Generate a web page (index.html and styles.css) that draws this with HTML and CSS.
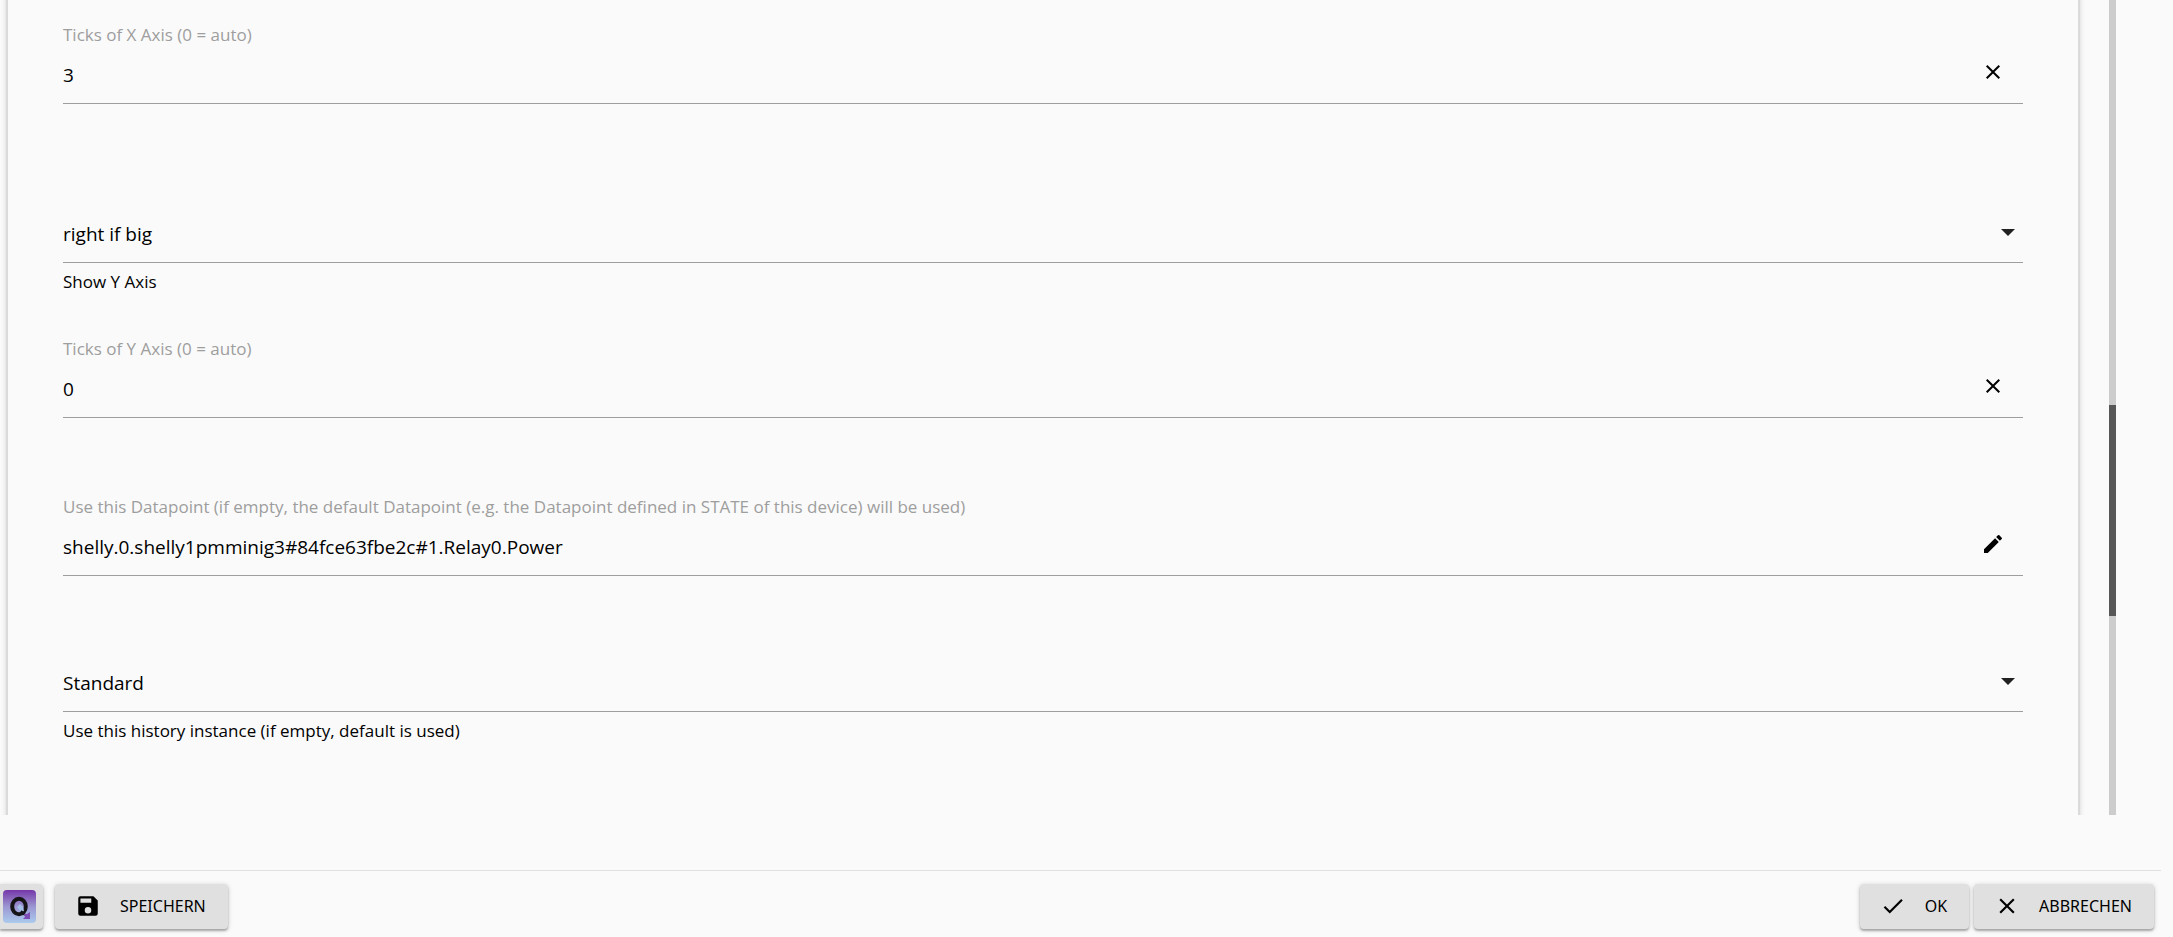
FILE: index.html
```html
<!DOCTYPE html>
<html lang="de">
<head>
<meta charset="utf-8">
<title>Device options</title>
<link rel="stylesheet" href="styles.css">
</head>
<body>
<main class="viewport">
  <form class="panel">
    <div class="field">
      <label class="label" for="ticks-x">Ticks of X Axis (0 = auto)</label>
      <div class="control">
        <input class="value" id="ticks-x" type="text" value="3">
        <button class="icon-button" type="button" aria-label="Clear"><svg class="icon" viewBox="0 0 24 24"><path d="M19 6.41L17.59 5 12 10.59 6.41 5 5 6.41 10.59 12 5 17.59 6.41 19 12 13.41 17.59 19 19 17.59 13.41 12z"/></svg></button>
      </div>
    </div>
    <div class="field field-spaced">
      <div class="control">
        <select class="value" id="show-y"><option>right if big</option></select>
        <svg class="arrow" viewBox="0 0 14 7"><path d="M0 0h14L7 7z"/></svg>
      </div>
      <label class="helper" for="show-y">Show Y Axis</label>
    </div>
    <div class="field">
      <label class="label" for="ticks-y">Ticks of Y Axis (0 = auto)</label>
      <div class="control">
        <input class="value" id="ticks-y" type="text" value="0">
        <button class="icon-button" type="button" aria-label="Clear"><svg class="icon" viewBox="0 0 24 24"><path d="M19 6.41L17.59 5 12 10.59 6.41 5 5 6.41 10.59 12 5 17.59 6.41 19 12 13.41 17.59 19 19 17.59 13.41 12z"/></svg></button>
      </div>
    </div>
    <div class="field">
      <label class="label" for="datapoint">Use this Datapoint (if empty, the default Datapoint (e.g. the Datapoint defined in STATE of this device) will be used)</label>
      <div class="control">
        <input class="value" id="datapoint" type="text" value="shelly.0.shelly1pmminig3#84fce63fbe2c#1.Relay0.Power">
        <button class="icon-button" type="button" aria-label="Edit"><svg class="icon" viewBox="0 0 24 24"><path d="M3 17.25V21h3.75L17.81 9.94l-3.75-3.75L3 17.25zM20.71 7.04a1 1 0 0 0 0-1.41l-2.34-2.34a1 1 0 0 0-1.41 0l-1.83 1.83 3.75 3.75 1.83-1.83z"/></svg></button>
      </div>
    </div>
    <div class="field field-last">
      <div class="control">
        <select class="value" id="history"><option>Standard</option></select>
        <svg class="arrow" viewBox="0 0 14 7"><path d="M0 0h14L7 7z"/></svg>
      </div>
      <label class="helper" for="history">Use this history instance (if empty, default is used)</label>
    </div>
  </form>
  <div class="scrollbar"><div class="thumb"></div></div>
</main>
<footer class="footer">
  <button class="button button-logo" type="button" aria-label="Quick">
    <svg class="logo" viewBox="0 0 33 33">
      <defs><linearGradient id="sky" x1="0" y1="0" x2="0" y2="1"><stop offset="0" stop-color="#7537a8"/><stop offset=".5" stop-color="#9b96d2"/><stop offset="1" stop-color="#abcbed"/></linearGradient></defs>
      <rect width="33" height="33" rx="4" fill="url(#sky)"/>
      <ellipse cx="16" cy="16.500" rx="6.800" ry="7.800" fill="none" stroke="#151518" stroke-width="4"/>
      <path d="M14 17l3-3 3 3 1 4-3 1z" fill="#a3bfe8"/>
      <path d="M18 21l4 4" stroke="#151518" stroke-width="2"/>
      <path d="M27 22v7h-7l2-2-1-3 3 0z" fill="#7d4db5"/>
    </svg>
  </button>
  <button class="button" type="button"><svg class="icon-large" viewBox="0 0 24 24"><path d="M17 3H5a2 2 0 0 0-2 2v14a2 2 0 0 0 2 2h14a2 2 0 0 0 2-2V7l-4-4zm-5 16a3 3 0 1 1 0-6 3 3 0 0 1 0 6zm3-10H5V5h10v4z"/></svg>SPEICHERN</button>
  <span class="spacer"></span>
  <button class="button" type="button"><svg class="icon-large" viewBox="0 0 24 24"><path d="M9 16.170L4.830 12l-1.420 1.410L9 19 21 7l-1.410-1.410z"/></svg>OK</button>
  <button class="button" type="button"><svg class="icon-large" viewBox="0 0 24 24"><path d="M19 6.41L17.59 5 12 10.59 6.41 5 5 6.41 10.59 12 5 17.59 6.41 19 12 13.41 17.59 19 19 17.59 13.41 12z"/></svg>ABBRECHEN</button>
</footer>
</body>
</html>
```
FILE: styles.css
```css
* { box-sizing: border-box; }
body {
  margin: 0;
  height: 100vh;
  display: flex;
  flex-direction: column;
  overflow: hidden;
  background: #fafafa;
  color: #000;
  font: 17px/24px "Open Sans", "Noto Sans", sans-serif;
}
.viewport {
  flex: 1;
  min-height: 0;
  display: flex;
  overflow: hidden;
  margin-right: 57px;
  padding-left: 8px;
}
.panel {
  flex: 1;
  margin: -8px 31px -8px 0;
  padding: 31px 55px 0;
  box-shadow: 0 0 0 2px #dadada, 0 0 6px 1px rgba(0, 0, 0, .2);
}
.field { display: flex; flex-direction: column; padding-bottom: 77px; }
.field-spaced { padding: 25px 0 42px; }
.field-last { padding-top: 2px; }
.label { color: #9e9e9e; }
.helper { margin-top: 7px; }
.field-spaced .helper { margin-bottom: 1px; }
.control {
  position: relative;
  display: flex;
  align-items: center;
  height: 57px;
  border-bottom: 1px solid #9e9e9e;
}
.value {
  flex: 1;
  height: 56px;
  padding: 0;
  border: 0;
  outline: 0;
  background: none;
  color: #000;
  font: 19px/28px "Open Sans", "Noto Sans", sans-serif;
  appearance: none;
}
.icon-button {
  display: flex;
  padding: 0;
  border: 0;
  margin: 0 18px 6px 0;
  background: none;
}
.icon { width: 24px; height: 24px; }
.arrow {
  position: absolute;
  right: 8px;
  top: 23px;
  width: 14px;
  height: 7px;
  fill: #212121;
  pointer-events: none;
}
.scrollbar { width: 7px; padding-top: 405px; background: #ccc; }
.thumb { height: 211px; background: #575757; }
.footer {
  display: flex;
  align-items: flex-start;
  gap: 5px;
  height: 67px;
  margin: 55px 12px 0 0;
  padding: 13px 7px 0 0;
  border-top: 1px solid #e0e0e0;
}
.button {
  display: flex;
  align-items: center;
  gap: 19px;
  height: 45px;
  padding: 0 22px 2px 20px;
  border: 0;
  border-radius: 4px;
  background: #e0e0e0;
  color: #000;
  font: 16px/24px "Noto Sans", "Open Sans", sans-serif;
  box-shadow: 0 2px 2px rgba(0, 0, 0, .24), 0 1px 5px rgba(0, 0, 0, .2);
}
.button-logo {
  margin-right: 7px;
  padding: 0 7px 0 3px;
  border-radius: 0 4px 4px 0;
}
.logo { width: 33px; height: 33px; }
.icon-large { width: 26px; height: 26px; }
.spacer { flex: 1; }
```
